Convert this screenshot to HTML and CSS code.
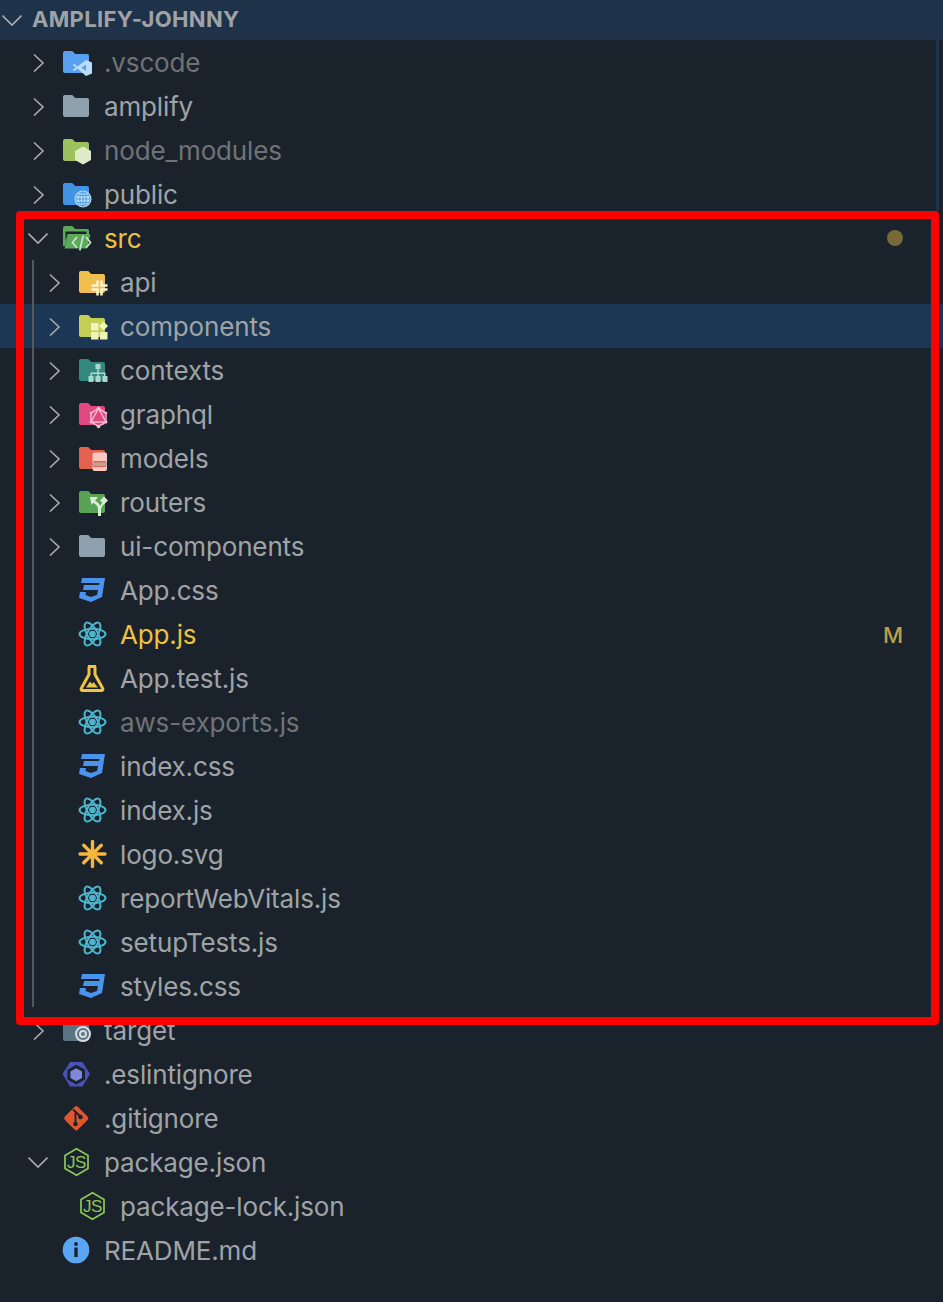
FILE: index.html
```html
<!DOCTYPE html>
<html lang="en">
<head>
    <meta charset="UTF-8">
    <meta name="viewport" content="width=device-width, initial-scale=1.0">
    <title>Explorer - amplify-johnny</title>
    <link rel="stylesheet" href="styles.css">
</head>
<body>
    <!-- Icon sprite -->
    <svg class="sprite" xmlns="http://www.w3.org/2000/svg">
        <symbol id="folder" viewBox="0 0 30 30">
            <path d="M3 4h7.200l3 3H25a2 2 0 0 1 2 2v15a2 2 0 0 1-2 2H3a2 2 0 0 1-2-2V6a2 2 0 0 1 2-2z"/>
        </symbol>
        <symbol id="chev-right" viewBox="0 0 20 20">
            <path d="M6 2.500l9 8.500-9 8.500" fill="none" stroke="#a9abad" stroke-width="1.600"/>
        </symbol>
        <symbol id="chev-down" viewBox="0 0 20 20">
            <path d="M.5 5.500l9.500 9.500 9.500-9.500" fill="none" stroke="#a9abad" stroke-width="1.600"/>
        </symbol>
        <symbol id="react" viewBox="0 0 30 30">
            <g fill="none" stroke="#4db6cf" stroke-width="2">
                <ellipse cx="14.500" cy="15" rx="13" ry="5.200"/>
                <ellipse cx="14.500" cy="15" rx="13" ry="5.200" transform="rotate(60 14.500 15)"/>
                <ellipse cx="14.500" cy="15" rx="13" ry="5.200" transform="rotate(120 14.500 15)"/>
            </g>
            <circle cx="14.500" cy="15" r="3.300" fill="#4db6cf"/>
        </symbol>
        <symbol id="css" viewBox="0 0 30 30">
            <path fill="#4a94ee" d="M4 3h23l-3 19-11 5-12-4 1-6h6l-.5 3 5.500 2 6-2 1-5H5l1-5h15l.5-2H3z"/>
        </symbol>
        <symbol id="nodejs" viewBox="0 0 30 30">
            <path d="M14.500 1.800l11.500 6.600v13.200l-11.500 6.600L3 21.600V8.400z" fill="none" stroke="#8fc756" stroke-width="1.700"/>
            <text x="14.500" y="21" class="js-mark">JS</text>
        </symbol>
    </svg>

    <div class="explorer">
        <div class="section-head">
            <svg class="twistie-head"><use href="#chev-down"/></svg>
            <span class="section-title">AMPLIFY-JOHNNY</span>
        </div>

        <div class="row">
            <svg class="twistie"><use href="#chev-right"/></svg>
            <svg class="icon" viewBox="0 0 30 30">
                <use href="#folder" fill="#589ff0"/>
                <path fill="#bbdcfb" d="M24 13l6 2.500v11L24 29 15.500 21.500 12.500 24 10.500 23 14 20.500 10.500 18l2-1 3 2.500zM24 17.500l-4.500 3 4.500 3.500z"/>
            </svg>
            <span class="name dim">.vscode</span>
        </div>
        <div class="row">
            <svg class="twistie"><use href="#chev-right"/></svg>
            <svg class="icon" viewBox="0 0 30 30"><use href="#folder" fill="#90a1ae"/></svg>
            <span class="name">amplify</span>
        </div>
        <div class="row">
            <svg class="twistie"><use href="#chev-right"/></svg>
            <svg class="icon" viewBox="0 0 30 30">
                <use href="#folder" fill="#9bc25f"/>
                <path fill="#dfeac8" d="M21 11.500l8 4.500v9l-8 4.500-8-4.500v-9z"/>
            </svg>
            <span class="name dim">node_modules</span>
        </div>
        <div class="row">
            <svg class="twistie"><use href="#chev-right"/></svg>
            <svg class="icon" viewBox="0 0 30 30">
                <use href="#folder" fill="#4293e3"/>
                <circle cx="21" cy="20" r="8.500" fill="#b9def9"/>
                <g fill="none" stroke="#4293e3" stroke-width=".8">
                    <circle cx="21" cy="20" r="7"/>
                    <ellipse cx="21" cy="20" rx="3.200" ry="7"/>
                    <path d="M14 20h14M15 16.500h12M15 23.500h12M21 13v14"/>
                </g>
            </svg>
            <span class="name">public</span>
        </div>

        <div class="row">
            <svg class="twistie"><use href="#chev-down"/></svg>
            <svg class="icon" viewBox="0 0 30 30">
                <path fill="#5ba95b" d="M3 3h7.200l3 3H25a2 2 0 0 1 2 2v4H6l-3 11H1V5a2 2 0 0 1 2-2z"/>
                <path fill="#1a232c" d="M3.500 8.500h21v2.500H5.500l-2 7z"/>
                <path fill="#5ba95b" d="M6 11.500h22.500L25 24.500a1.500 1.500 0 0 1-1.500 1H2.500z"/>
                <path fill="none" stroke="#c9e8c8" stroke-width="1.700" d="M15 14l-4.500 5.500 4.500 5.500M24 14l4.500 5.500-4.500 5.500M21.200 12.500l-3.400 15"/>
            </svg>
            <span class="name modified">src</span>
            <span class="dot"></span>
        </div>

        <div class="children">
            <div class="row nested">
                <svg class="twistie"><use href="#chev-right"/></svg>
                <svg class="icon" viewBox="0 0 30 30">
                    <use href="#folder" fill="#f0bf4d"/>
                    <path fill="none" stroke="#fff4d4" stroke-width="2.500" d="M19.500 13.500v5h-6M23.500 13.500v5h6M19.500 28.500v-6h-6M23.500 28.500v-6h6"/>
                </svg>
                <span class="name">api</span>
            </div>
            <div class="row nested selected">
                <svg class="twistie"><use href="#chev-right"/></svg>
                <svg class="icon" viewBox="0 0 30 30">
                    <use href="#folder" fill="#c3cf55"/>
                    <path fill="#f0f3ba" d="M13 12h7.500v7.500H13zM13 21h7.500v7.500H13zM22 21h7.500v7.500H22zM25.500 10.500l4.500 4.500-4.500 4.500L21 15z"/>
                </svg>
                <span class="name">components</span>
            </div>
            <div class="row nested">
                <svg class="twistie"><use href="#chev-right"/></svg>
                <svg class="icon" viewBox="0 0 30 30">
                    <use href="#folder" fill="#33897d"/>
                    <path fill="#a8d9d1" d="M17.500 9h5v5h-1.700v3.500h6.700V21h2v6h-5v-6h1.500v-2h-5.200v2h1.700v6h-5v-6h1.800v-2h-5.300v2h1.500v6h-5v-6h2v-3.500h6.800V14h-1.800z"/>
                </svg>
                <span class="name">contexts</span>
            </div>
            <div class="row nested">
                <svg class="twistie"><use href="#chev-right"/></svg>
                <svg class="icon" viewBox="0 0 30 30">
                    <use href="#folder" fill="#e0487f"/>
                    <g fill="none" stroke="#f6b9d1" stroke-width="1.500">
                        <path d="M20.500 9.500l7.500 4.500v9l-7.500 4.500L13 23v-9z"/>
                        <path d="M20.500 9.500L28 23H13z"/>
                    </g>
                    <g fill="#f6b9d1">
                        <circle cx="20.500" cy="9.500" r="1.800"/>
                        <circle cx="20.500" cy="27.500" r="1.800"/>
                        <circle cx="13" cy="14" r="1.300"/>
                        <circle cx="28" cy="14" r="1.300"/>
                        <circle cx="13" cy="23" r="1.500"/>
                        <circle cx="28" cy="23" r="1.500"/>
                    </g>
                </svg>
                <span class="name">graphql</span>
            </div>
            <div class="row nested">
                <svg class="twistie"><use href="#chev-right"/></svg>
                <svg class="icon" viewBox="0 0 30 30">
                    <use href="#folder" fill="#e5604f"/>
                    <rect x="14.500" y="9.500" width="14.500" height="18.500" rx="2" fill="#f9c8c2"/>
                    <path fill="#e5604f" d="M15.500 18h12.500v1.500H15.500zM15.500 23h12.500v1H15.500z"/>
                    <path fill="#1a232c" opacity=".25" d="M14.500 19.500h14.500V23H14.500z"/>
                </svg>
                <span class="name">models</span>
            </div>
            <div class="row nested">
                <svg class="twistie"><use href="#chev-right"/></svg>
                <svg class="icon" viewBox="0 0 30 30">
                    <use href="#folder" fill="#59a256"/>
                    <path fill="none" stroke="#d8eed4" stroke-width="3" d="M21.500 29v-7c0-3.500-2.500-6-7-8.500"/>
                    <path fill="#d8eed4" d="M12 10h8l-6.500 8zM26 9.500l4 4-4 4-4-4z"/>
                    <path fill="none" stroke="#d8eed4" stroke-width="2" d="M22.500 21c.5-2 1.500-3.500 3-5"/>
                </svg>
                <span class="name">routers</span>
            </div>
            <div class="row nested">
                <svg class="twistie"><use href="#chev-right"/></svg>
                <svg class="icon" viewBox="0 0 30 30"><use href="#folder" fill="#90a1ae"/></svg>
                <span class="name">ui-components</span>
            </div>
            <div class="row nested">
                <span class="twistie"></span>
                <svg class="icon"><use href="#css"/></svg>
                <span class="name">App.css</span>
            </div>
            <div class="row nested">
                <span class="twistie"></span>
                <svg class="icon"><use href="#react"/></svg>
                <span class="name modified">App.js</span>
                <span class="badge">M</span>
            </div>
            <div class="row nested">
                <span class="twistie"></span>
                <svg class="icon" viewBox="0 0 30 30">
                    <path fill="none" stroke="#f0c343" stroke-width="3" stroke-linejoin="round" d="M10 3.500h8M11 3.500v8L3.500 25a1.500 1.500 0 0 0 1.300 2.500h18.400a1.500 1.500 0 0 0 1.300-2.500L17 11.500v-8"/>
                    <path fill="#f0c343" d="M8 24.500l4-6 2 2.500 1.500-2 4.500 5.500z"/>
                </svg>
                <span class="name">App.test.js</span>
            </div>
            <div class="row nested">
                <span class="twistie"></span>
                <svg class="icon"><use href="#react"/></svg>
                <span class="name dim">aws-exports.js</span>
            </div>
            <div class="row nested">
                <span class="twistie"></span>
                <svg class="icon"><use href="#css"/></svg>
                <span class="name">index.css</span>
            </div>
            <div class="row nested">
                <span class="twistie"></span>
                <svg class="icon"><use href="#react"/></svg>
                <span class="name">index.js</span>
            </div>
            <div class="row nested">
                <span class="twistie"></span>
                <svg class="icon" viewBox="0 0 30 30">
                    <path fill="none" stroke="#f6b53f" stroke-width="3.400" stroke-linecap="round" d="M14.500 2.500v25M2 15h25M5.700 6.200l17.600 17.600M23.300 6.200L5.700 23.800"/>
                </svg>
                <span class="name">logo.svg</span>
            </div>
            <div class="row nested">
                <span class="twistie"></span>
                <svg class="icon"><use href="#react"/></svg>
                <span class="name">reportWebVitals.js</span>
            </div>
            <div class="row nested">
                <span class="twistie"></span>
                <svg class="icon"><use href="#react"/></svg>
                <span class="name">setupTests.js</span>
            </div>
            <div class="row nested">
                <span class="twistie"></span>
                <svg class="icon"><use href="#css"/></svg>
                <span class="name">styles.css</span>
            </div>
        </div>

        <div class="row">
            <svg class="twistie"><use href="#chev-right"/></svg>
            <svg class="icon" viewBox="0 0 30 30">
                <use href="#folder" fill="#5a7482"/>
                <circle cx="21" cy="19" r="7" fill="none" stroke="#d5dde1" stroke-width="2"/>
                <circle cx="21" cy="19" r="3" fill="none" stroke="#d5dde1" stroke-width="2"/>
            </svg>
            <span class="name">target</span>
        </div>
        <div class="row">
            <span class="twistie"></span>
            <svg class="icon" viewBox="0 0 30 30">
                <path fill="#4b51b6" d="M8 3h12.500l7.500 12-7.500 12.500H8L.5 15z"/>
                <path fill="#1a232c" d="M14.200 5.800l8.800 5v9.800l-8.800 5-8.800-5v-9.800z"/>
                <path fill="#8088d6" d="M14.200 9.300l5.800 3.300v6.400l-5.800 3.300-5.800-3.300v-6.400z"/>
            </svg>
            <span class="name">.eslintignore</span>
        </div>
        <div class="row">
            <span class="twistie"></span>
            <svg class="icon" viewBox="0 0 30 30">
                <rect x="5" y="6" width="18.500" height="18.500" rx="2.500" transform="rotate(45 14.250 15.250)" fill="#e0572e"/>
                <path fill="none" stroke="#1a232c" stroke-width="1.800" d="M11 6.500l7 6.500M13.500 10v10"/>
                <circle cx="13.500" cy="21" r="2.300" fill="#1a232c"/>
                <circle cx="18.500" cy="14" r="2.300" fill="#1a232c"/>
            </svg>
            <span class="name">.gitignore</span>
        </div>
        <div class="row">
            <svg class="twistie"><use href="#chev-down"/></svg>
            <svg class="icon"><use href="#nodejs"/></svg>
            <span class="name">package.json</span>
        </div>
        <div class="row nested">
            <span class="twistie"></span>
            <svg class="icon"><use href="#nodejs"/></svg>
            <span class="name">package-lock.json</span>
        </div>
        <div class="row">
            <span class="twistie"></span>
            <svg class="icon" viewBox="0 0 30 30">
                <circle cx="14" cy="15" r="13.300" fill="#5aa6f5"/>
                <circle cx="14" cy="9" r="1.900" fill="#1a232c"/>
                <path fill="#1a232c" d="M12.300 12.500h3.400v9.500h-3.400z"/>
            </svg>
            <span class="name">README.md</span>
        </div>

        <div class="edge-strip"></div>
        <div class="marker"></div>
    </div>
</body>
</html>
```

FILE: styles.css
```css
* {
    margin: 0;
    padding: 0;
    box-sizing: border-box;
}

body {
    background: #1a232c;
    color: #a0a3a6;
    font-family: Inter, 'Noto Sans', sans-serif;
    font-size: 26px;
    height: 1302px;
    overflow: hidden;
}

.sprite {
    display: none;
}

.explorer {
    position: relative;
    height: 100%;
}

.section-head {
    display: flex;
    align-items: center;
    height: 40px;
    background: #1e3249;
    padding-left: 2px;
}

.twistie-head {
    width: 20px;
    height: 20px;
    margin-right: 10px;
}

.section-title {
    margin-bottom: 2px;
    font-size: 22px;
    font-weight: 700;
    letter-spacing: 0.35px;
}

.row {
    display: flex;
    align-items: center;
    height: 44px;
    padding: 0 40px 0 28px;
}

.row.nested {
    padding-left: 44px;
}

.row.selected {
    background: #1c3753;
}

.twistie {
    flex: none;
    width: 20px;
    height: 20px;
    margin-right: 14px;
}

.icon {
    flex: none;
    width: 30px;
    height: 30px;
    margin-right: 12px;
}

.name {
    margin-top: 2px;
    line-height: 42px;
    white-space: nowrap;
    letter-spacing: -0.15px;
}

.name.dim {
    color: #707376;
}

.name.modified {
    color: #eec043;
}

.dot {
    width: 16px;
    height: 16px;
    margin-left: auto;
    border-radius: 50%;
    background: #79693a;
}

.badge {
    margin-top: 2px;
    margin-left: auto;
    color: #b9a049;
    font-size: 22px;
    font-weight: 500;
}

.js-mark {
    fill: #8fc756;
    font-family: 'Liberation Sans', sans-serif;
    font-size: 17px;
    letter-spacing: -0.5px;
    text-anchor: middle;
}

/* indent guide under src */
.children {
    position: relative;
}

.children::before {
    content: "";
    position: absolute;
    left: 32px;
    top: 0;
    bottom: 1px;
    width: 2px;
    background: #54585c;
}

.edge-strip {
    position: absolute;
    left: 936px;
    top: 40px;
    width: 3px;
    height: 171px;
    background: #1e3249;
}

/* red annotation drawn over the tree */
.marker {
    position: absolute;
    left: 16px;
    top: 211px;
    width: 923px;
    height: 814px;
    border: 8px solid #ff0000;
    border-radius: 4px;
}
```
